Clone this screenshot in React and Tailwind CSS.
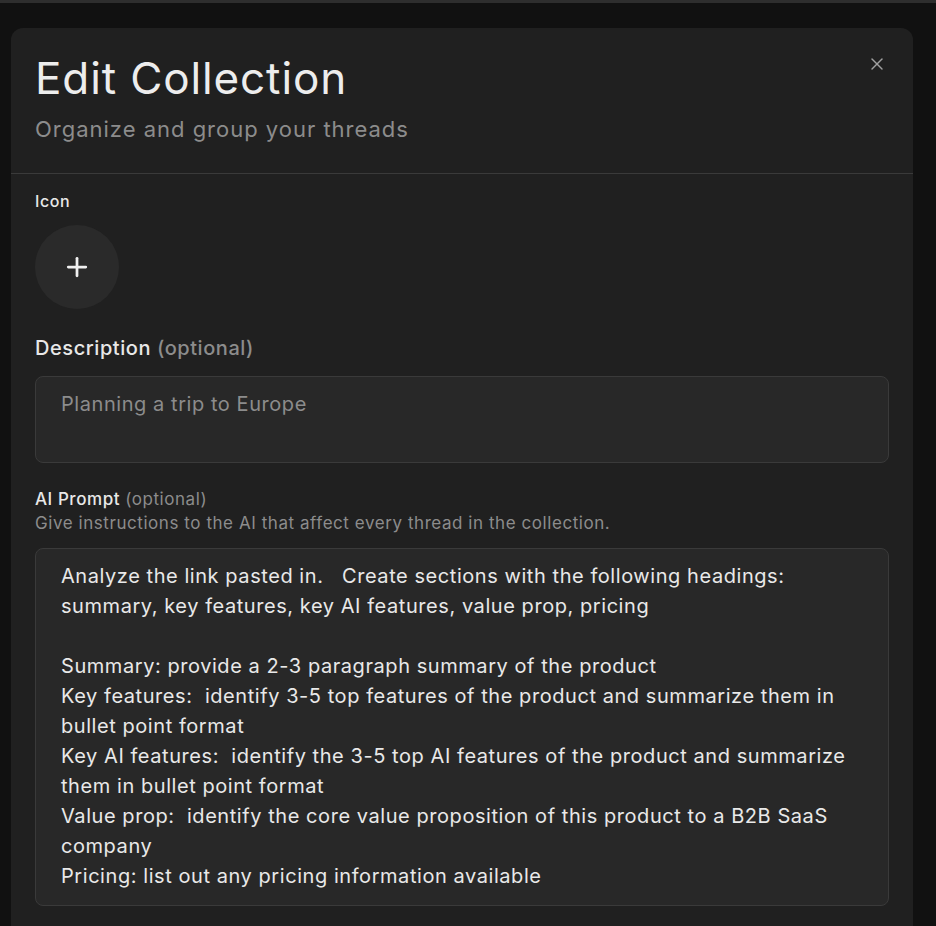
import { X, Plus } from "lucide-react";

const prompt = `Analyze the link pasted in.   Create sections with the following headings: summary, key features, key AI features, value prop, pricing

Summary: provide a 2-3 paragraph summary of the product
Key features:  identify 3-5 top features of the product and summarize them in bullet point format
Key AI features:  identify the 3-5 top AI features of the product and summarize them in bullet point format
Value prop:  identify the core value proposition of this product to a B2B SaaS company
Pricing: list out any pricing information available`;

export default function App() {
    return (
        <div className="h-[926px] overflow-hidden bg-[#111111] border-t-[3px] border-[#2e2e2e] font-['Inter',sans-serif] tracking-[0.035em]">
            <div className="mx-[11px] mt-[25px] w-[902px] h-[920px] rounded-xl bg-[#202020]">
                <div className="relative px-6 pt-[22px] pb-[29px] border-b border-[#3a3a3a]">
                    <h2 className="text-[44px] leading-[56px] text-[#ededed] tracking-[0.02em]">
                        Edit Collection
                    </h2>
                    <p className="mt-[8px] text-[22px] leading-[30px] text-[#8c8c8c] tracking-[0.045em]">
                        Organize and group your threads
                    </p>
                    <button className="absolute right-[26px] top-[26px] text-[#a0a0a0]">
                        <X size={20} strokeWidth={1.75} />
                    </button>
                </div>
                <div className="px-6 pt-[16px]">
                    <div className="text-[16px] leading-[22px] font-medium text-[#e8e8e8]">Icon</div>
                    <div className="mt-[13px] w-[84px] h-[84px] rounded-full bg-[#2a2a2a] flex items-center justify-center text-[#f0f0f0]">
                        <Plus size={30} strokeWidth={2.2} />
                    </div>
                    <div className="mt-[25px] text-[20px] leading-[28px] font-medium text-[#e8e8e8]">
                        Description <span className="text-[#8c8c8c]">(optional)</span>
                    </div>
                    <div className="mt-[14px] h-[87px] rounded-lg border border-[#3a3a3a] bg-[#282828] px-[25px] pt-[13px] text-[20px] leading-[28px] text-[#8c8c8c]">
                        Planning a trip to Europe
                    </div>
                    <div className="mt-[24px] text-[17px] leading-[24px] font-medium text-[#e8e8e8]">
                        AI Prompt <span className="font-normal text-[#8c8c8c]">(optional)</span>
                    </div>
                    <div className="text-[17px] leading-[24px] text-[#8c8c8c]">
                        Give instructions to the AI that affect every thread in the collection.
                    </div>
                    <div className="mt-[13px] h-[358px] rounded-lg border border-[#3a3a3a] bg-[#282828] px-[25px] pt-[12px] pr-[40px] text-[20px] leading-[30px] text-[#e9e9e9] whitespace-pre-wrap">
                        {prompt}
                    </div>
                </div>
            </div>
        </div>
    );
}
